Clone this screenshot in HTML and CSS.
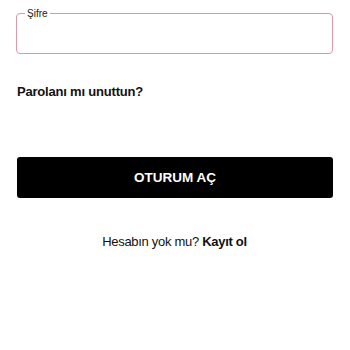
FILE: index.html
```html
<!DOCTYPE html>
<html lang="tr">
<head>
    <meta charset="UTF-8">
    <meta name="viewport" content="width=device-width, initial-scale=1.0">
    <title>Oturum Aç</title>
    <link rel="stylesheet" href="styles.css">
</head>
<body>
    <div class="container">
        <!-- Şifre alanı -->
        <fieldset class="field">
            <legend>Şifre</legend>
            <input type="password" class="field-input">
        </fieldset>

        <a href="#" class="forgot">Parolanı mı unuttun?</a>

        <button class="login-btn">OTURUM AÇ</button>

        <p class="signup">Hesabın yok mu? <a href="#">Kayıt ol</a></p>
    </div>
</body>
</html>
```

FILE: styles.css
```css
* {
    margin: 0;
    padding: 0;
    box-sizing: border-box;
}

body {
    font-family: "Liberation Sans", Arial, sans-serif;
    background-color: #fff;
    color: #111;
}

.container {
    padding: 8px 17px 0 16px;
    display: flex;
    flex-direction: column;
}

.field {
    border: 1px solid #dd98a3;
    border-radius: 4px;
    height: 46px;
    padding: 0 8px;
}

.field legend {
    font-size: 10px;
    padding: 0 2px;
    color: #222;
}

.field-input {
    width: 100%;
    height: 100%;
    border: none;
    outline: none;
    background: transparent;
}

.forgot {
    margin-top: 30px;
    margin-left: 1px;
    font-size: 13px;
    letter-spacing: -0.2px;
    font-weight: bold;
    color: #111;
    text-decoration: none;
}

.login-btn {
    margin-top: 58px;
    margin-left: 1px;
    height: 41px;
    background-color: #000;
    color: #fff;
    border: none;
    border-radius: 3px;
    font-family: inherit;
    font-size: 13.5px;
    font-weight: bold;
    cursor: pointer;
}

.signup {
    margin-top: 36px;
    text-align: center;
    font-size: 13px;
    letter-spacing: -0.3px;
}

.signup a {
    color: #111;
    font-weight: bold;
    text-decoration: none;
}
```
